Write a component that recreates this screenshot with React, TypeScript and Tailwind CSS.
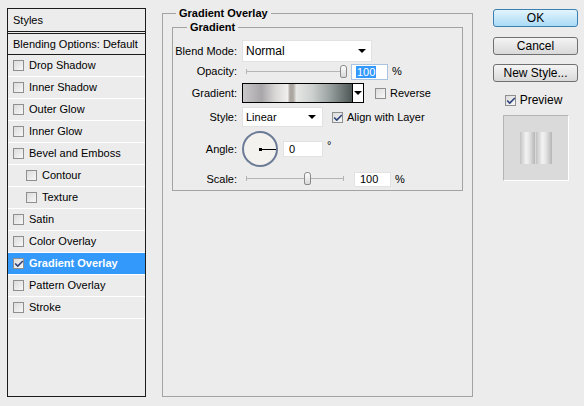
import { Check } from "lucide-react";

const styleItems = [
  { label: "Drop Shadow" },
  { label: "Inner Shadow" },
  { label: "Outer Glow" },
  { label: "Inner Glow" },
  { label: "Bevel and Emboss" },
  { label: "Contour", sub: true },
  { label: "Texture", sub: true },
  { label: "Satin" },
  { label: "Color Overlay" },
  { label: "Gradient Overlay", checked: true, active: true },
  { label: "Pattern Overlay" },
  { label: "Stroke" },
];

function Box({ checked }: { checked?: boolean }) {
  return (
    <span className="grid h-[11px] w-[11px] shrink-0 place-items-center border border-[#8e8f8f] bg-gradient-to-br from-[#dcdcdc] to-[#f8f8f8]">
      {checked ? <Check className="h-[10px] w-[10px] text-[#31457c]" strokeWidth={4} /> : null}
    </span>
  );
}

function Arrow() {
  return <span className="h-0 w-0 border-x-[4px] border-t-[4px] border-x-transparent border-t-black" />;
}

function Slider({ at }: { at: number }) {
  return (
    <div className="relative h-[14px] w-[98px]">
      <div className="absolute left-0 right-0 top-[6px] h-px bg-[#b4b4b4]" />
      <div className="absolute left-0 top-[4px] h-[5px] w-px bg-[#b4b4b4]" />
      <div className="absolute right-0 top-[4px] h-[5px] w-px bg-[#b4b4b4]" />
      <div
        className="absolute top-0 h-[13px] w-[7px] rounded-t-[3px] rounded-b-[2px] border border-[#8a8a8a] bg-gradient-to-b from-white to-[#d8d8d8]"
        style={{ left: at }}
      />
    </div>
  );
}

function Button({ children, primary }: { children: React.ReactNode; primary?: boolean }) {
  return (
    <button
      className={
        primary
          ? "h-[18px] w-[85px] rounded-[3px] border border-[#3c7fb1] bg-gradient-to-b from-[#e3f4fc] to-[#a9dbf6] text-[12px] leading-none text-black"
          : "h-[18px] w-[85px] rounded-[3px] border border-[#707070] bg-gradient-to-b from-[#f4f4f4] to-[#d9d9d9] text-[12px] leading-none text-black"
      }
    >
      {children}
    </button>
  );
}

// titled group box: the title sits in a gap of the top border line
function Group({ title, lead, className, bodyClass, children }: { title: string; lead: string; className?: string; bodyClass?: string; children: React.ReactNode }) {
  return (
    <div className={"flex flex-col " + (className ?? "")}>
      <div className="flex h-[13px] shrink-0">
        <div className={"mt-[6px] shrink-0 border-l border-t border-[#a3a3a3] " + lead} />
        <span className="px-[3px] font-bold leading-[13px]">{title}</span>
        <div className="mt-[6px] flex-1 border-r border-t border-[#a3a3a3]" />
      </div>
      <div className={"flex-1 border-x border-b border-[#a3a3a3] " + (bodyClass ?? "")}>{children}</div>
    </div>
  );
}

const gradientFill =
  "linear-gradient(to right, #c9c7c9 0%, #a8a6a9 17%, #dad8d7 30%, #f1efed 41%, #aca6a0 43%, #aca6a0 46%, #e6e7e5 49%, #cbcfcd 64%, #98a09f 80%, #4d5756 100%)";

const barFill = "linear-gradient(to right, #c2c2c2 0%, #f2f2f2 40%, #e6e6e6 60%, #b6b6b6 100%)";

export default function App() {
  return (
    <div
      className="flex h-[406px] w-[584px] bg-[#ececec] pl-[7px] pt-[8px] text-[11px] text-black"
      style={{ fontFamily: '"Liberation Sans", Arial, sans-serif' }}
    >
      {/* styles list */}
      <div className="flex h-[389px] w-[139px] flex-col border border-[#1c1c1c]">
        <div className="flex h-[23px] items-center border-b border-[#1c1c1c] pl-[5px]">Styles</div>
        <div className="mt-px flex h-[22px] items-center border-y border-[#1c1c1c] pl-[5px]">Blending Options: Default</div>
        {styleItems.map((it) => (
          <div
            key={it.label}
            className={
              it.active
                ? "flex h-[22px] items-center gap-[5px] border-b border-white bg-[#3399fa] font-bold text-white " + (it.sub ? "pl-[18px]" : "pl-[5px]")
                : "flex h-[22px] items-center gap-[5px] border-b border-white " + (it.sub ? "pl-[18px]" : "pl-[5px]")
            }
          >
            <Box checked={it.checked} />
            <span>{it.label}</span>
          </div>
        ))}
      </div>

      {/* settings group */}
      <Group title="Gradient Overlay" lead="w-[14px]" className="ml-[16px] mt-[-1px] h-[390px] w-[311px]" bodyClass="flex flex-col px-[9px] pt-px">
        <Group title="Gradient" lead="w-[15px]" bodyClass="pb-[3px]">
          <div className="flex flex-col">
            <div className="mt-[6px] flex h-[22px] items-center">
              <span className="w-[64px] text-right">Blend Mode:</span>
              <div className="ml-[5px] flex h-[22px] w-[130px] items-center justify-between border border-[#e2e2e2] bg-white pl-[3px] pr-[5px] text-[12px]">
                Normal
                <Arrow />
              </div>
            </div>
            <div className="mt-px flex h-[17px] items-center">
              <span className="w-[64px] text-right">Opacity:</span>
              <div className="ml-[9px]">
                <Slider at={94} />
              </div>
              <div className="ml-[7px] flex h-[16px] w-[37px] items-center border border-[#a9c4e0] bg-white pl-[4px]">
                <span className="bg-[#3399ff] px-px leading-[12px] text-white">100</span>
              </div>
              <span className="ml-[4px]">%</span>
            </div>
            <div className="mt-[3px] flex h-[20px] items-center">
              <span className="w-[64px] text-right">Gradient:</span>
              <div className="ml-[5px] flex h-[20px] w-[122px] border border-black">
                <div className="flex-1 border-r border-black" style={{ background: gradientFill }} />
                <div className="grid w-[10px] place-items-center bg-white">
                  <Arrow />
                </div>
              </div>
              <div className="ml-[11px] flex items-center gap-[4px]">
                <Box />
                <span>Reverse</span>
              </div>
            </div>
            <div className="mt-[4px] flex h-[20px] items-center">
              <span className="w-[64px] text-right">Style:</span>
              <div className="ml-[5px] flex h-[20px] w-[81px] items-center justify-between border border-[#e2e2e2] bg-white pl-[3px] pr-[6px]">
                Linear
                <Arrow />
              </div>
              <div className="ml-[9px] flex items-center gap-[4px]">
                <Box checked />
                <span>Align with Layer</span>
              </div>
            </div>
            <div className="mt-[4px] flex h-[36px] items-center">
              <span className="w-[64px] text-right">Angle:</span>
              <div className="relative ml-[5px] h-[36px] w-[36px] rounded-full border-2 border-[#6d7c96] bg-[#f4f2ef]">
                <div className="absolute left-[15px] top-[15px] h-[3px] w-[3px] bg-black" />
                <div className="absolute left-[16px] top-[16px] h-px w-[16px] bg-black" />
              </div>
              <div className="ml-[5px] flex h-[16px] w-[40px] items-center border border-[#e2e2e2] bg-white pl-[5px]">0</div>
              <span className="mb-[8px] ml-[4px]">°</span>
            </div>
            <div className="mt-[4px] flex h-[16px] items-center">
              <span className="w-[64px] text-right">Scale:</span>
              <div className="ml-[9px]">
                <Slider at={58} />
              </div>
              <div className="ml-[10px] flex h-[15px] w-[37px] items-center border border-[#e2e2e2] bg-white pl-[5px]">100</div>
              <span className="ml-[4px]">%</span>
            </div>
          </div>
        </Group>
      </Group>

      {/* buttons + preview */}
      <div className="ml-[20px] mt-px flex w-[85px] flex-col items-center">
        <Button primary>OK</Button>
        <div className="mt-[10px]">
          <Button>Cancel</Button>
        </div>
        <div className="mt-[9px]">
          <Button>New Style...</Button>
        </div>
        <div className="mt-[9px] flex items-center gap-[4px] pr-[4px] text-[12px]">
          <Box checked />
          <span>Preview</span>
        </div>
        <div className="mt-[6px] flex h-[66px] w-[66px] items-center justify-center border border-b-white border-l-[#b4b4b4] border-r-white border-t-[#b4b4b4] bg-[#dadada]">
          <div className="flex h-[32px] w-[32px] gap-px">
            <div className="flex-1" style={{ background: barFill }} />
            <div className="flex-1" style={{ background: barFill }} />
          </div>
        </div>
      </div>
    </div>
  );
}
